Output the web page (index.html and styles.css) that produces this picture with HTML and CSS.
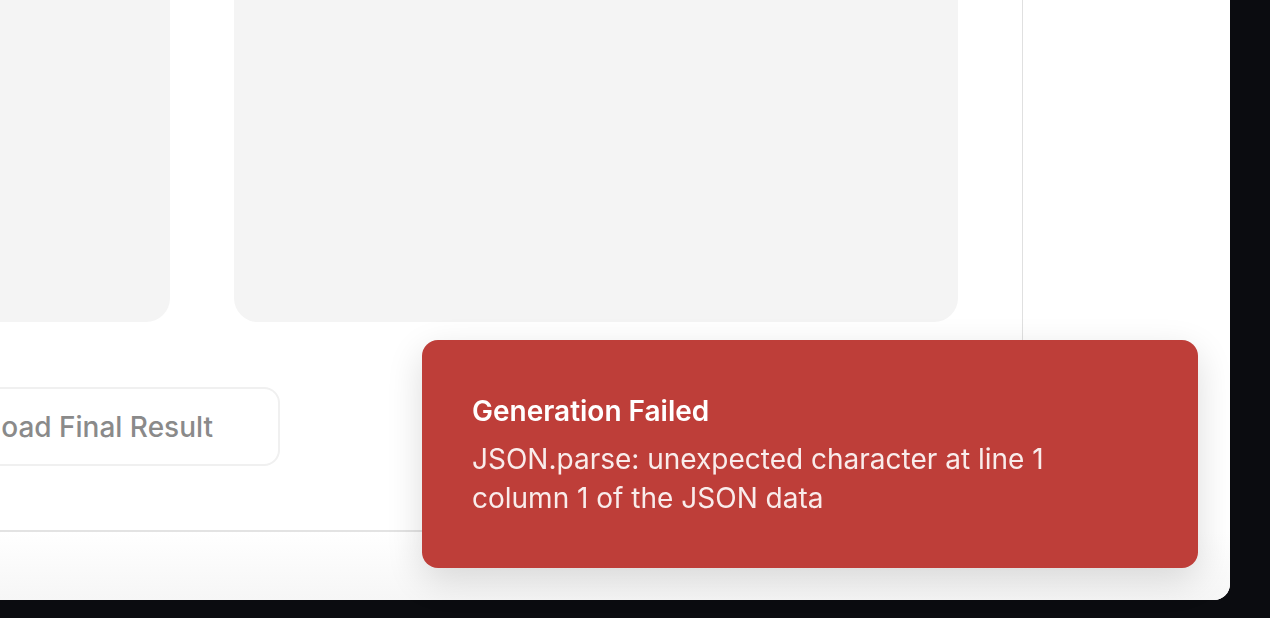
FILE: index.html
```html
<!DOCTYPE html>
<html lang="en">
<head>
<meta charset="utf-8">
<title>Generation Failed</title>
<link rel="stylesheet" href="styles.css">
</head>
<body>
<div class="app">
  <div class="workspace">
    <main class="main">
      <div class="panels">
        <div class="panel panel-left"></div>
        <div class="panel panel-right"></div>
      </div>
      <div class="actions">
        <button class="btn-download" type="button"><span>Download Final Result</span></button>
      </div>
    </main>
    <aside class="sidebar"></aside>
  </div>
  <footer class="footer"></footer>
</div>
<div class="toast" role="alert">
  <div class="toast-title">Generation Failed</div>
  <div class="toast-body">JSON.parse: unexpected character at line 1 column 1 of the JSON data</div>
</div>
</body>
</html>
```
FILE: styles.css
```css
html, body {
  margin: 0;
  padding: 0;
  height: 100%;
}
body {
  background: #0b0c10;
  font-family: Inter, "Noto Sans", sans-serif;
  overflow: hidden;
}
.app {
  width: 1230px;
  height: 600px;
  background: #ffffff;
  border-bottom-right-radius: 16px;
  display: flex;
  flex-direction: column;
  overflow: hidden;
}
.workspace {
  display: flex;
  height: 532px;
  flex: none;
}
.main {
  width: 958px;
  padding-right: 64px;
  display: flex;
  flex-direction: column;
  border-right: 1px solid #e0e0e0;
  border-bottom: 2px solid #e3e3e3;
}
.panels {
  display: flex;
  gap: 64px;
  height: 322px;
  flex: none;
}
.panel {
  background: #f4f4f4;
  height: 100%;
}
.panel-left {
  width: 170px;
  border-bottom-right-radius: 24px;
}
.panel-right {
  width: 724px;
  border-radius: 0 0 24px 24px;
}
.actions {
  padding-top: 65px;
  display: flex;
}
.btn-download {
  width: 280px;
  height: 79px;
  box-sizing: border-box;
  border: 2px solid #f0f0f0;
  border-left: none;
  border-radius: 0 16px 16px 0;
  background: #ffffff;
  display: flex;
  align-items: center;
  justify-content: flex-end;
  padding: 0 65px 0 0;
  overflow: hidden;
  font-family: Inter, "Noto Sans", sans-serif;
  font-size: 28px;
  font-weight: 500;
  color: #8a8a8a;
  white-space: nowrap;
}
.sidebar {
  flex: 1;
}
.footer {
  flex: 1;
  background: linear-gradient(#ffffff, #f6f6f6);
}
.toast {
  position: fixed;
  right: 72px;
  bottom: 50px;
  width: 776px;
  height: 228px;
  box-sizing: border-box;
  padding: 52px 50px 0 50px;
  background: #be3e39;
  border-radius: 16px;
  box-shadow: 0 12px 36px rgba(0, 0, 0, 0.14);
  color: #ffffff;
}
.toast-title {
  font-size: 28px;
  font-weight: 600;
  line-height: 38px;
}
.toast-body {
  margin-top: 10px;
  font-size: 28px;
  line-height: 39px;
  color: rgba(255, 255, 255, 0.9);
  max-width: 620px;
}
```
